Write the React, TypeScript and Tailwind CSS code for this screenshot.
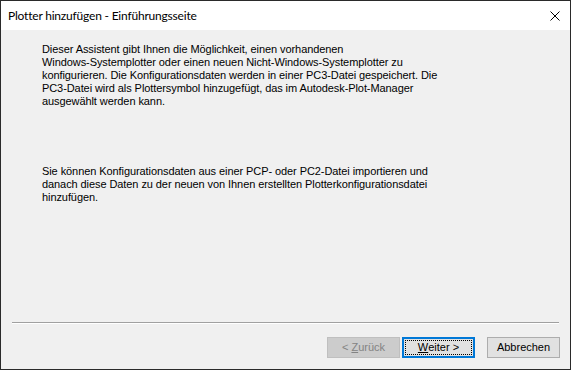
const para1 = [
  "Dieser Assistent gibt Ihnen die Möglichkeit, einen vorhandenen",
  "Windows-Systemplotter oder einen neuen Nicht-Windows-Systemplotter zu",
  "konfigurieren. Die Konfigurationsdaten werden in einer PC3-Datei gespeichert. Die",
  "PC3-Datei wird als Plottersymbol hinzugefügt, das im Autodesk-Plot-Manager",
  "ausgewählt werden kann.",
];

const para2 = [
  "Sie können Konfigurationsdaten aus einer PCP- oder PC2-Datei importieren und",
  "danach diese Daten zu der neuen von Ihnen erstellten Plotterkonfigurationsdatei",
  "hinzufügen.",
];

function Lines({ lines }: { lines: string[] }) {
  return (
    <div className="whitespace-nowrap">
      {lines.map((l, i) => (
        <div key={i} className="h-[13px]">
          {l}
        </div>
      ))}
    </div>
  );
}

export default function App() {
  return (
    <div
      className="w-[571px] h-[370px] border border-[#2a2a2a] bg-[#f0f0f0] flex flex-col text-black"
      style={{ fontFamily: '"Liberation Sans", Arial, sans-serif' }}
    >
      {/* Title bar */}
      <div className="h-[29px] bg-white flex items-center justify-between pl-[7px] pr-[10px]">
        <span
          className="text-[12px] tracking-[-0.2px] pt-px"
          style={{ fontFamily: 'Lato, "Noto Sans", sans-serif' }}
        >
          Plotter hinzufügen - Einführungsseite
        </span>
        <svg width="10" height="10" viewBox="0 0 10 10" className="mt-[1px]">
          <path d="M0.5 0.5 L9.5 9.5 M9.5 0.5 L0.5 9.5" stroke="#000" strokeWidth="1" fill="none" />
        </svg>
      </div>

      {/* Body text */}
      <div className="flex-1 pl-[41px] pt-[13px] text-[11px] leading-[13px] tracking-[-0.08px]">
        <Lines lines={para1} />
        <div className="h-[57px]" />
        <Lines lines={para2} />
      </div>

      {/* Separator */}
      <div className="mx-[11px] border-t border-[#a0a0a0] border-b-white border-b" />

      {/* Buttons */}
      <div className="flex justify-end pr-[10px] pt-[13px] pb-[11px] text-[11px]">
        <button
          disabled
          className="w-[73px] h-[21px] bg-[#cccccc] border border-[#bfbfbf] text-[#838383]"
        >
          &lt; <span className="underline">Z</span>urück
        </button>
        <button className="ml-[2px] w-[73px] h-[21px] bg-[#e1e1e1] border-2 border-[#0078d7] p-px">
          <div className="w-full h-full border border-dotted border-black flex items-center justify-center">
            <span className="underline">W</span>eiter &gt;
          </div>
        </button>
        <button className="ml-[12px] w-[73px] h-[21px] bg-[#e1e1e1] border border-[#adadad]">
          Abbrechen
        </button>
      </div>
    </div>
  );
}
